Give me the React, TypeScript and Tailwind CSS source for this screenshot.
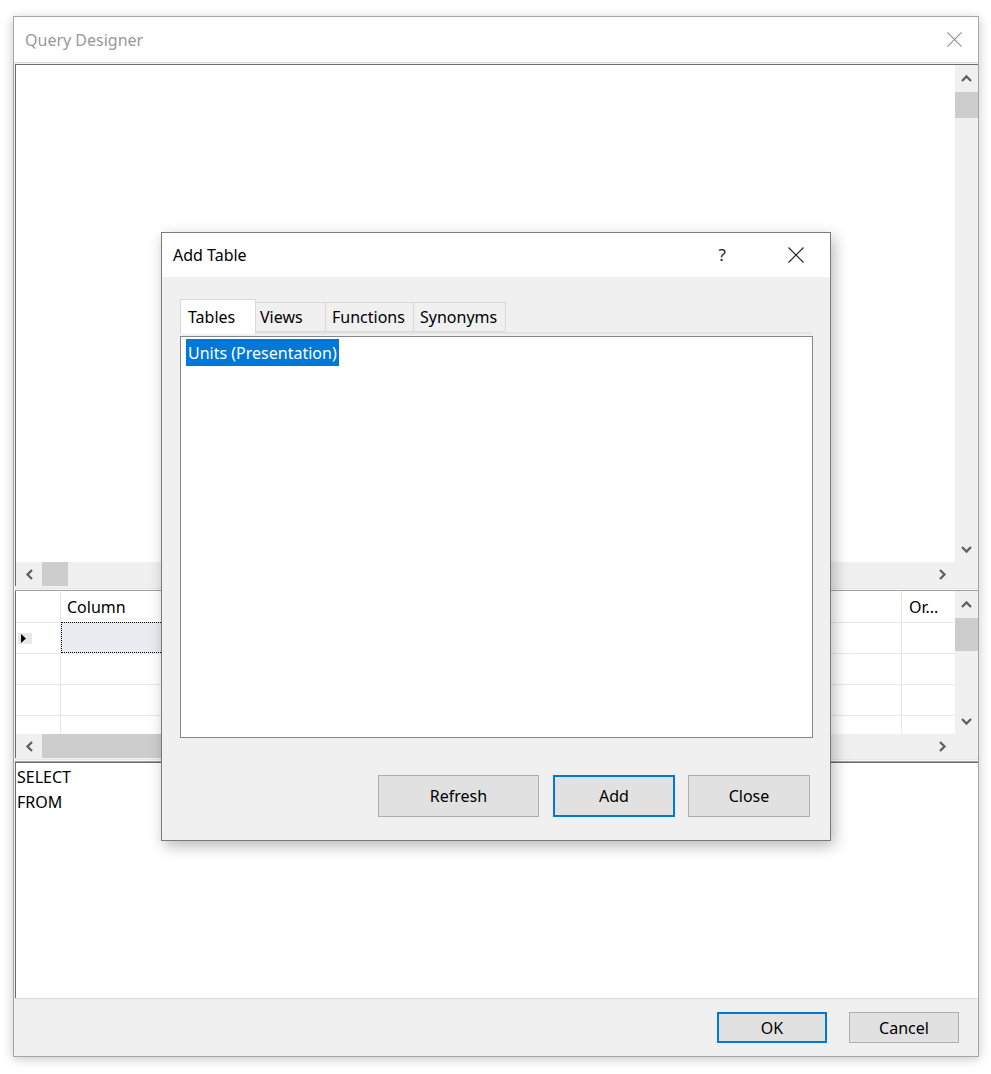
import React from "react";

const font = "font-['Segoe_UI','Noto_Sans',sans-serif]";

function Chevron({ dir }: { dir: "up" | "down" | "left" | "right" }) {
  const d = {
    up: "M1 7 L5.5 2.5 L10 7",
    down: "M1 2 L5.5 6.5 L10 2",
    left: "M7 1 L2.5 5.5 L7 10",
    right: "M2 1 L6.5 5.5 L2 10",
  }[dir];
  const vertical = dir === "up" || dir === "down";
  return (
    <svg
      width={vertical ? 11 : 9}
      height={vertical ? 9 : 11}
      viewBox={vertical ? "0 0 11 9" : "0 0 9 11"}
      fill="none"
      stroke="#606060"
      strokeWidth="2.3"
    >
      <path d={d} />
    </svg>
  );
}

function CloseGlyph({ color, size }: { color: string; size: number }) {
  return (
    <svg width={size} height={size} viewBox="0 0 16 16" stroke={color} strokeWidth="1.1">
      <path d="M0.5 0.5 L15.5 15.5 M15.5 0.5 L0.5 15.5" />
    </svg>
  );
}

function VScroll({ thumbTop, thumbHeight }: { thumbTop: number; thumbHeight: number }) {
  return (
    <div className="w-[23px] h-full bg-[#f0f0f0] flex flex-col">
      <div className="h-[26px] flex items-center justify-center shrink-0">
        <Chevron dir="up" />
      </div>
      <div className="flex-1 flex flex-col">
        <div className="bg-[#cdcdcd] w-full" style={{ marginTop: thumbTop, height: thumbHeight }} />
      </div>
      <div className="h-[26px] flex items-center justify-center shrink-0">
        <Chevron dir="down" />
      </div>
    </div>
  );
}

function HScroll({ thumbWidth }: { thumbWidth: number }) {
  return (
    <div className="h-[24px] bg-[#f0f0f0] flex shrink-0">
      <div className="w-[26px] flex items-center justify-center shrink-0">
        <Chevron dir="left" />
      </div>
      <div className="flex-1 flex">
        <div className="bg-[#cdcdcd] h-full" style={{ width: thumbWidth }} />
      </div>
      <div className="w-[26px] flex items-center justify-center shrink-0">
        <Chevron dir="right" />
      </div>
      <div className="w-[23px] shrink-0" />
    </div>
  );
}

function Splitter({ h }: { h: string }) {
  return (
    <div className={`${h} bg-[#f0f0f0] flex flex-col justify-end shrink-0`}>
      <div className="h-[1px] bg-[#e6e6e6]" />
      <div className="h-[1px] bg-[#f8f8f8]" />
      <div className="h-[1px] bg-[#a0a0a0]" />
    </div>
  );
}

function GridRow({ selected, h = "h-[31px]" }: { selected?: boolean; h?: string }) {
  return (
    <div className={`flex ${h} border-t border-[#e8e8e8]`}>
      <div className="w-[45px] shrink-0 border-r border-[#e8e8e8] flex items-center">
        {selected && (
          <div className="ml-[2px] w-[14px] h-[11px] bg-[#e8e8e8] flex items-center pl-[3px]">
            <svg width="5" height="9" viewBox="0 0 5 9">
              <path d="M0 0 L5 4.5 L0 9 Z" fill="#000" />
            </svg>
          </div>
        )}
      </div>
      <div
        className={`w-[260px] shrink-0 border-r border-[#e8e8e8] ${
          selected ? "bg-[#e8ecf0] border border-dotted border-black -mt-[1px]" : ""
        }`}
      />
      <div className="w-[581px] shrink-0 border-r border-[#e8e8e8]" />
      <div className="flex-1" />
    </div>
  );
}

function WinButton({ label, primary, w, h, m = "" }: { label: string; primary?: boolean; w: string; h: string; m?: string }) {
  return (
    <div
      className={`${w} ${h} ${m} bg-[#e1e1e1] flex items-center justify-center text-[16px] text-black ${
        primary ? "border-2 border-[#0078d7]" : "border border-[#adadad]"
      }`}
    >
      {label}
    </div>
  );
}

function Tab({ label, active, w, pl }: { label: string; active?: boolean; w: string; pl: string }) {
  if (active) {
    return (
      <div className={`${w} ${pl} h-[35px] bg-white border border-b-0 border-[#d9d9d9] flex items-center text-[16px] text-black relative z-10 -mb-[2px]`}>
        {label}
      </div>
    );
  }
  return (
    <div className={`${w} ${pl} h-[30px] mt-[2px] bg-[#f0f0f0] border border-l-0 border-[#d9d9d9] flex items-center text-[16px] text-black`}>
      {label}
    </div>
  );
}

function AddTableDialog() {
  return (
    <div className="absolute left-[161px] top-[232px] w-[670px] h-[609px] border border-[#7a7a7a] bg-[#f0f0f0] shadow-[3px_5px_14px_rgba(0,0,0,0.28)] flex flex-col">
      <div className="h-[44px] bg-white flex items-center pl-[11px] shrink-0">
        <span className="text-[16px] text-black">Add Table</span>
        <span className="ml-auto text-[17px] text-[#222] mr-[62px]">?</span>
        <span className="mr-[26px]">
          <CloseGlyph color="#222" size={16} />
        </span>
      </div>
      <div className="pl-[18px] pt-[22px] flex flex-col">
        <div className="flex items-end h-[33px]">
          <Tab label="Tables" active w="w-[76px]" pl="pl-[7px]" />
          <Tab label="Views" w="w-[70px]" pl="pl-[4px]" />
          <Tab label="Functions" w="w-[88px]" pl="pl-[6px]" />
          <Tab label="Synonyms" w="w-[92px]" pl="pl-[6px]" />
        </div>
        <div className="w-[631px] border-t-2 border-[#e3e3e3] h-[4px]" />
        <div className="w-[633px] h-[402px] border border-[#828790] bg-white pt-[2px] pl-[5px]">
          <div className="inline-flex items-center h-[27px] px-[2px] bg-[#0078d7] text-white text-[16px]">
            Units (Presentation)
          </div>
        </div>
        <div className="flex mt-[37px] ml-[198px]">
          <WinButton label="Refresh" w="w-[161px]" h="h-[42px]" />
          <WinButton label="Add" primary w="w-[122px]" h="h-[42px]" m="ml-[14px]" />
          <WinButton label="Close" w="w-[122px]" h="h-[42px]" m="ml-[13px]" />
        </div>
      </div>
    </div>
  );
}

export default function App() {
  return (
    <div className={`${font} relative w-[991px] h-[1074px] bg-white pt-[16px] pl-[13px] overflow-hidden`}>
      <div className="w-[966px] h-[1041px] border border-[#a6a6a6] bg-[#f0f0f0] flex flex-col shadow-[0_2px_10px_rgba(0,0,0,0.22)]">
        {/* title bar */}
        <div className="h-[45px] bg-white flex items-center justify-between pl-[11px] pr-[16px] shrink-0">
          <span className="text-[16px] text-[#999999]">Query Designer</span>
          <CloseGlyph color="#8a8a8a" size={15} />
        </div>
        <div className="h-[2px] border-t border-[#d6d6d6] bg-[#f4f4f4] shrink-0" />

        <div className="ml-[1px] flex flex-col flex-1">
          {/* diagram pane */}
          <div className="h-[522px] border-t border-l border-[#6d6d6d] flex flex-col shrink-0">
            <div className="flex flex-1">
              <div className="flex-1 bg-white" />
              <VScroll thumbTop={1} thumbHeight={26} />
            </div>
            <HScroll thumbWidth={26} />
          </div>
          <Splitter h="h-[5px]" />

          {/* grid pane */}
          <div className="h-[167px] border-l border-[#6d6d6d] flex flex-col shrink-0">
            <div className="flex flex-1 min-h-0">
              <div className="flex-1 bg-white flex flex-col overflow-hidden text-[16px] text-black">
                <div className="flex h-[31px] shrink-0">
                  <div className="w-[45px] shrink-0 border-r border-[#e8e8e8]" />
                  <div className="w-[260px] shrink-0 border-r border-[#e8e8e8] flex items-center pl-[6px]">
                    Column
                  </div>
                  <div className="w-[581px] shrink-0 border-r border-[#e8e8e8]" />
                  <div className="flex-1 flex items-center pl-[7px]">Or...</div>
                </div>
                <GridRow selected />
                <GridRow />
                <GridRow />
                <GridRow h="h-[19px]" />
              </div>
              <VScroll thumbTop={1} thumbHeight={33} />
            </div>
            <HScroll thumbWidth={360} />
          </div>
          <Splitter h="h-[4px]" />

          {/* sql pane */}
          <div className="h-[236px] border-t border-l border-[#6d6d6d] bg-white pl-[1px] pt-[2px] text-[16px] leading-[25px] text-black shrink-0">
            <div>SELECT</div>
            <div>FROM</div>
          </div>
        </div>

        {/* bottom bar */}
        <div className="h-[58px] border-t border-[#dcdcdc] bg-[#f0f0f0] flex items-start justify-end pt-[13px] pr-[19px] gap-[22px] shrink-0">
          <WinButton label="OK" primary w="w-[110px]" h="h-[31px]" />
          <WinButton label="Cancel" w="w-[110px]" h="h-[31px]" />
        </div>
      </div>

      <AddTableDialog />
    </div>
  );
}
